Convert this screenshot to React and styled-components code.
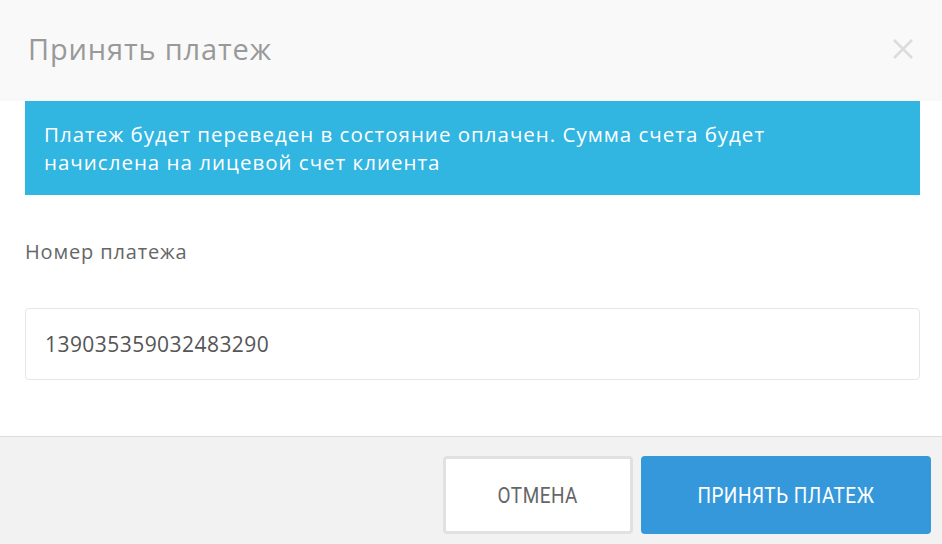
import React from 'react';
import styled, { createGlobalStyle } from 'styled-components';

const GlobalStyle = createGlobalStyle`
  html, body {
    margin: 0;
    padding: 0;
    background: #ffffff;
  }
  * {
    box-sizing: border-box;
  }
`;

const App = () => {
  return (
    <>
      <GlobalStyle />
      <Modal>
        <Header>
          <Title>Принять платеж</Title>
          <CloseButton aria-label="Закрыть">
            <svg width="22" height="22" viewBox="0 0 22 22">
              <path d="M2 2 L20 20 M20 2 L2 20" stroke="#dcdcdc" strokeWidth="2.6" />
            </svg>
          </CloseButton>
        </Header>
        <Body>
          <Alert>
            Платеж будет переведен в состояние оплачен. Сумма счета будет
            начислена на лицевой счет клиента
          </Alert>
          <Label>Номер платежа</Label>
          <Input value="139035359032483290" readOnly />
        </Body>
        <Footer>
          <Button>
            <ButtonText>Отмена</ButtonText>
          </Button>
          <Button primary>
            <ButtonText>Принять платеж</ButtonText>
          </Button>
        </Footer>
      </Modal>
    </>
  );
};

export default App;

const Modal = styled.div`
  width: 942px;
  height: 544px;
  display: flex;
  flex-direction: column;
  background: #ffffff;
  font-family: 'Open Sans', 'Liberation Sans', sans-serif;
  overflow: hidden;
`;

const Header = styled.div`
  height: 101px;
  display: flex;
  align-items: center;
  justify-content: space-between;
  padding: 0 28px 4px 28px;
  background: #f9f9f9;
`;

const Title = styled.h1`
  margin: 0;
  font-weight: 400;
  font-size: 29px;
  line-height: 36px;
  letter-spacing: 0.85px;
  color: #999999;
`;

const CloseButton = styled.button`
  display: flex;
  align-items: center;
  justify-content: center;
  padding: 0;
  border: none;
  background: transparent;
  cursor: pointer;
`;

const Body = styled.div`
  flex: 1;
  display: flex;
  flex-direction: column;
  padding: 0 22px 0 25px;
  border-bottom: 1px solid #dddddd;
`;

const Alert = styled.div`
  padding: 19px 80px 19px 19px;
  background: #31b5e1;
  color: #ffffff;
  font-size: 20.5px;
  line-height: 28px;
  letter-spacing: 1px;
`;

const Label = styled.label`
  margin-top: 43px;
  font-size: 20px;
  line-height: 28px;
  letter-spacing: 0.85px;
  color: #666666;
`;

const Input = styled.input`
  margin-top: 42px;
  height: 72px;
  padding: 0 19px;
  border: 1px solid #e6e6e6;
  border-radius: 4px;
  background: #ffffff;
  font-family: 'Open Sans', 'Liberation Sans', sans-serif;
  font-size: 21px;
  letter-spacing: 0.45px;
  color: #555555;
  outline: none;
`;

const Footer = styled.div`
  height: 107px;
  display: flex;
  align-items: flex-start;
  justify-content: flex-end;
  gap: 8px;
  padding: 19px 11px 0 0;
  background: #f2f2f2;
`;

const Button = styled.button`
  height: 78px;
  width: ${(p) => (p.primary ? '290px' : '190px')};
  display: flex;
  align-items: center;
  justify-content: center;
  border: ${(p) => (p.primary ? 'none' : '3px solid #e1e1e1')};
  border-radius: 4px;
  background: ${(p) => (p.primary ? '#3598db' : '#ffffff')};
  color: ${(p) => (p.primary ? '#ffffff' : '#666666')};
  font-family: Roboto, 'Liberation Sans', sans-serif;
  cursor: pointer;
`;

const ButtonText = styled.span`
  display: inline-block;
  font-size: 22px;
  text-transform: uppercase;
  letter-spacing: 0.6px;
  transform: scaleX(0.86);
`;
